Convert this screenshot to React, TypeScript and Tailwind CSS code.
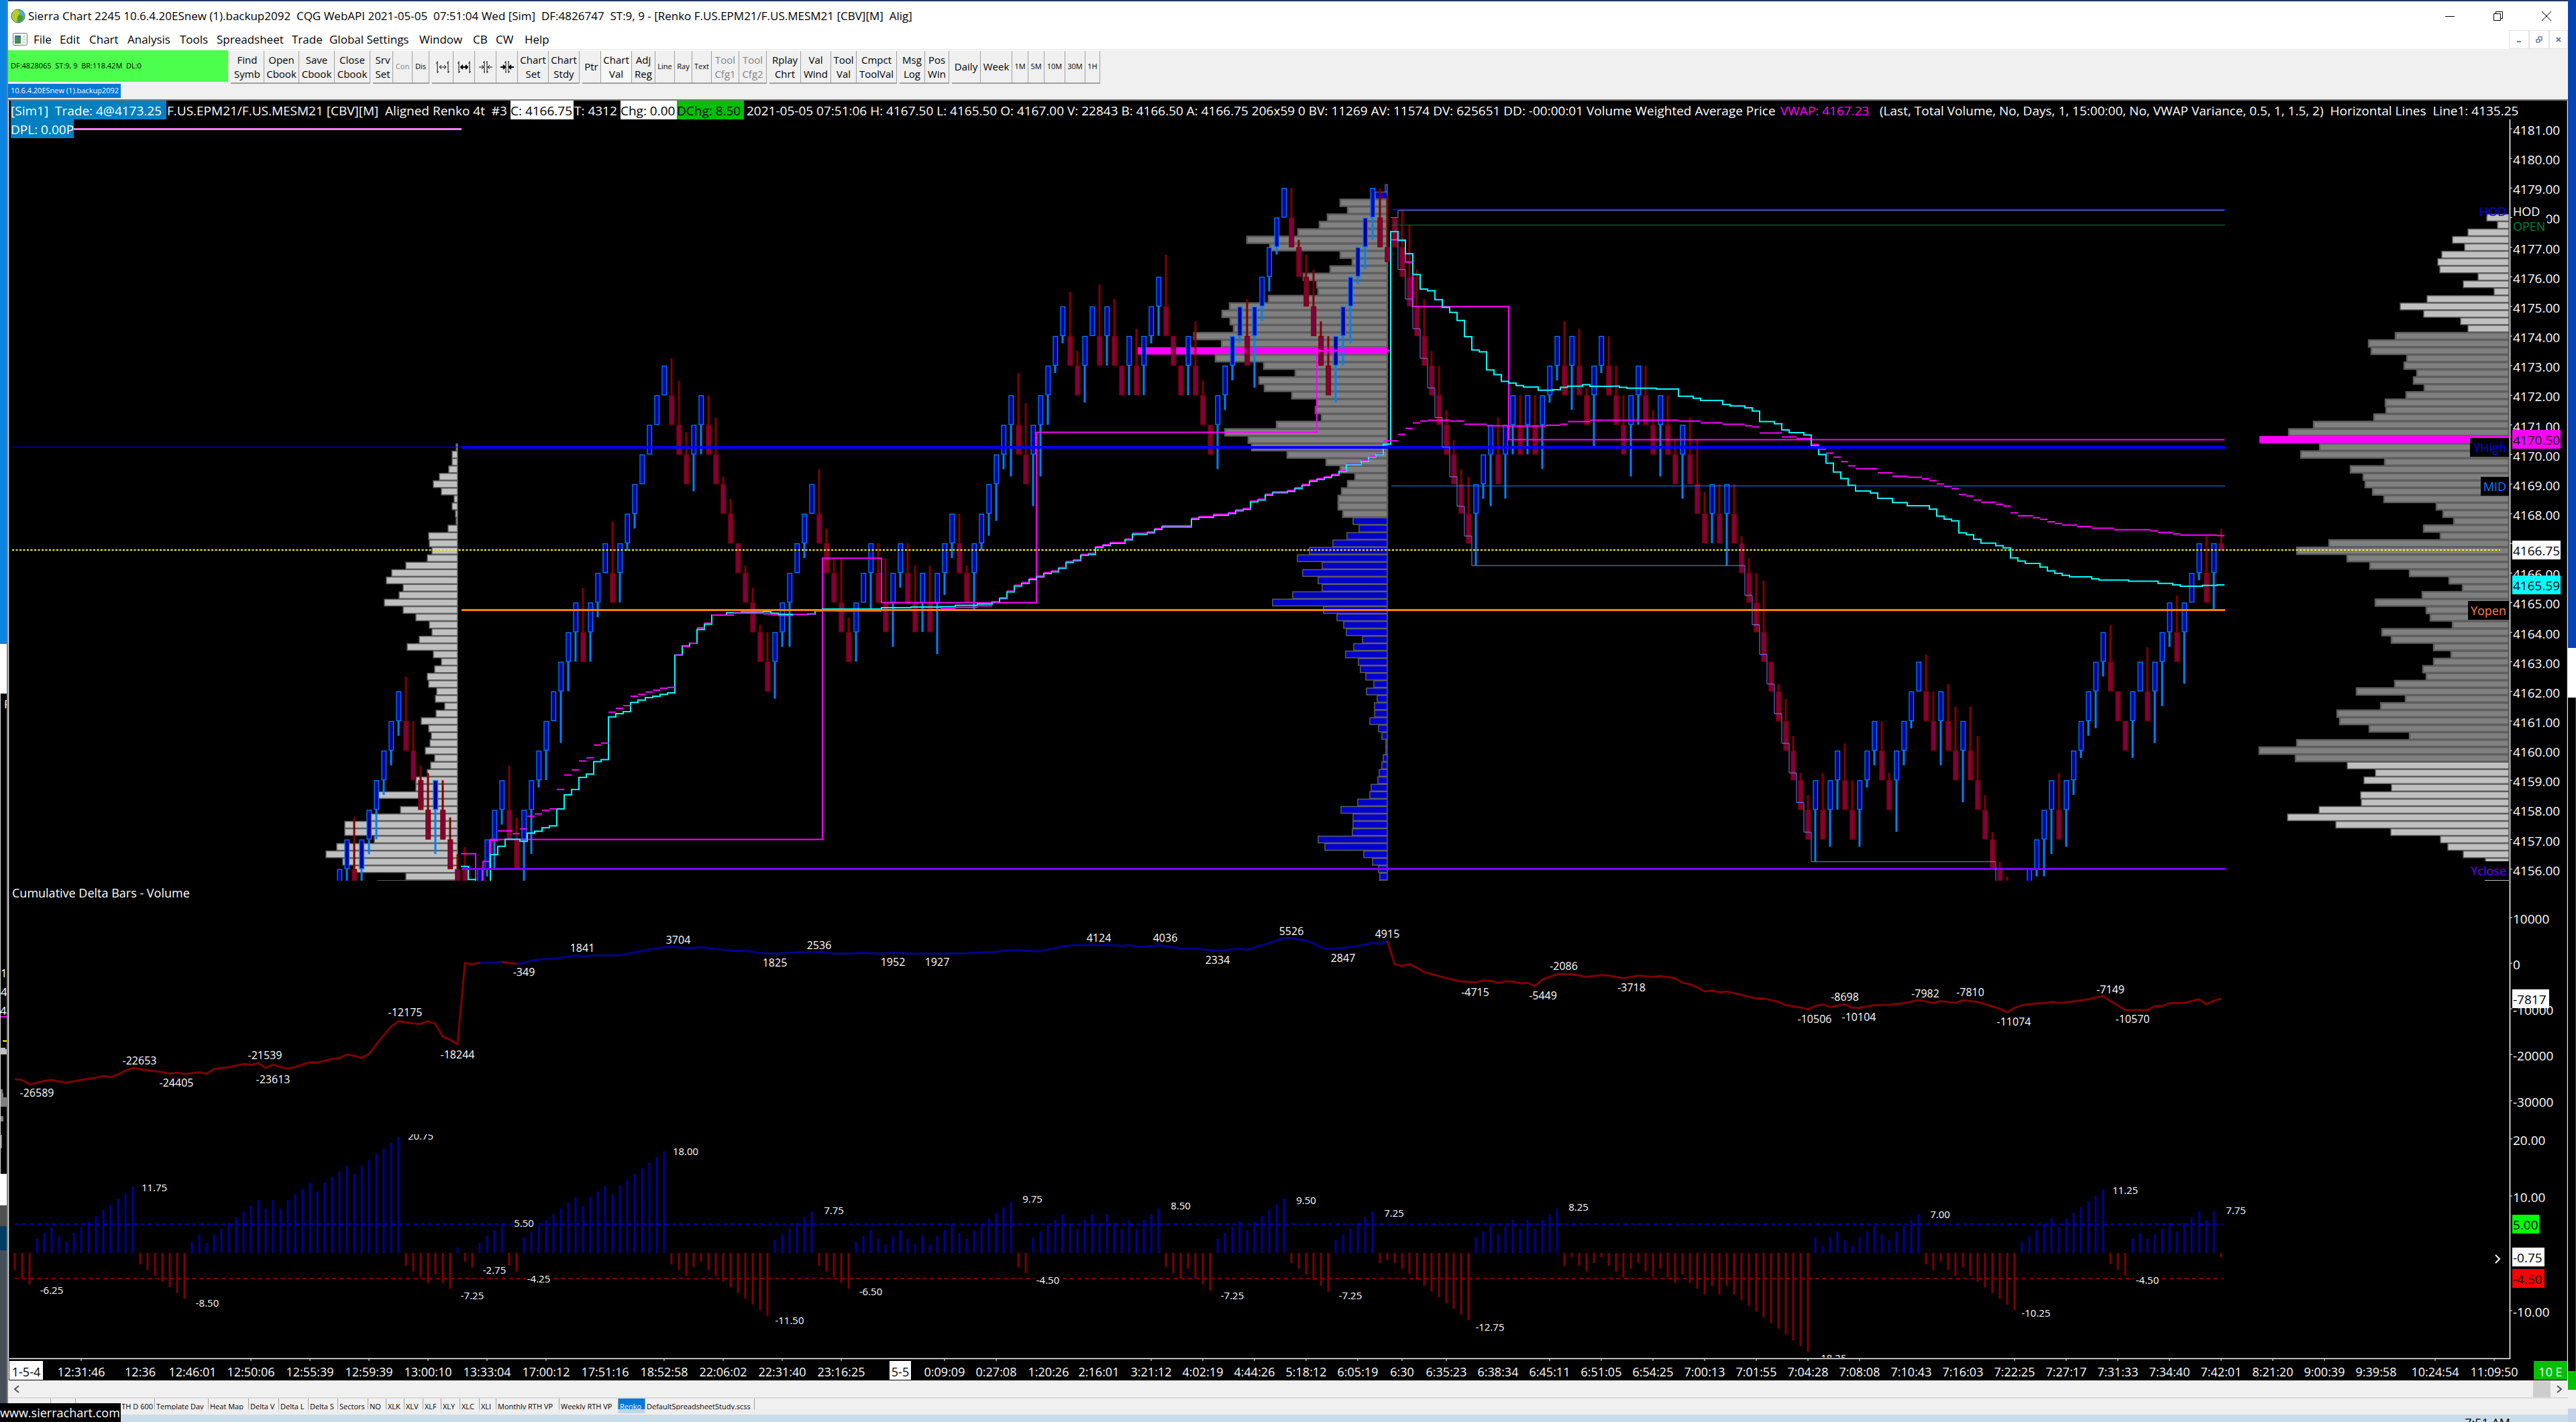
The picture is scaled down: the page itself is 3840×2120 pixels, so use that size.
import React from "react";
import clsx from "clsx";

/* ---------- scales ---------- */
const barX = (i: number) => 22 + 11 * i;
const priceY = (p: number) => 192 + (4181 - p) * 44.15;
const deltaY = (v: number) => 1436 - v * 0.68;
const swingY = (v: number) => 1868 - v * 8.54;

/* ---------- price bars: direction, top of body (41xx), wick in ticks; first bar is number 44 ---------- */
const FIRST_BAR = 44;
const BARS = `U56.0 U57.2 D56.7 U57.2 U58.2 U59.4 U60.2 U61.2 U62.2 D61.6 D60.4 D59.2 D58.5 U59.6 D58.4 D57.3 D56.2 D56.3 - U56.0
U57.1 U58.4 U59.2 D58.6 D57.3 U58.6 U59.6 U60.1 U61.4 U62.0 U63.7 U64.4 U65.4 D64.6 U65.4 U66.2 U67.0 D66.7 U67.4 U68.1
U69.2 U70.0 U71.0 U72.0 U73.0 D72.5 D71.6 D70.3 U71.5 U72.4 D71.4 D70.5 D69.1 D68.2 D67.0 D66.1 D65.2 D64.1 D63.4 U64.5
U65.2 U66.6 U67.0 U68.2 U69.0 D68.6 D67.2 D66.2 D65.6 D64.2 U65.4 U66.0 U67.5 D66.4 D65.6 U66.6 U67.2 D66.4 D65.5 U66.4
D65.5 U66.7 U67.3 U68.2 D67.4 D66.1 U67.5 U68.1 U69.3 U70.5 U71.2 U72.7 D71.7 D70.7 U71.7 U72.7 U73.4 U74.1 U75.1 D74.6
D73.2 U74.5 U75.0 D74.7 U75.4 D74.5 D73.0 U74.4 D73.5 U74.4 U75.1 U76.4 D75.7 D74.0 D73.0 U74.4 D73.6 D72.2 D71.0 U72.6
U73.2 U74.2 U75.1 D74.5 U75.7 U76.2 U77.2 U78.1 U79.0 D78.4 D77.1 D76.3 D75.5 D74.2 D73.4 U74.5 U75.4 U76.5 U77.1 U78.3
U79.3 D78.4 D77.7 D78.0 D77.5 D76.7 D75.5 D74.5 D73.2 D72.4 D71.2 D70.2 D69.2 D68.5 U69.7 U70.2 U71.7 D70.5 U71.6 U72.4
D71.4 U72.4 D71.4 U72.6 U73.1 U74.2 D73.6 U74.6 D73.5 D72.1 U73.7 U74.1 D73.4 D72.4 D71.4 U72.7 U73.4 D72.4 D71.2 U72.7
D71.4 D70.2 U71.6 D70.5 D69.6 D68.3 U69.4 D68.4 U69.7 D68.4 D67.1 D66.2 D65.4 D64.7 D63.0 D62.1 D61.3 D60.2 D59.1 D58.2
U59.7 D58.5 U59.5 U60.4 D59.5 D58.4 U59.5 U60.1 U61.2 D60.4 D59.1 U60.7 U61.2 U62.1 U63.0 D62.5 D61.4 U62.6 D61.5 D60.6
U61.7 D60.6 D59.6 D58.2 D57.1 D56.1 D55.3 - - U56.0 U57.1 U58.5 U59.6 D58.5 U59.5 U60.2 U61.1 U62.2 U63.5 U64.2
D63.5 D62.0 D61.0 U62.5 U63.0 D62.6 U63.7 U64.6 U65.2 D64.5 U65.7 U66.0 U67.1 D66.5 U67.5 D67.2`
  .trim()
  .split(/\s+/);

type Step = [number, number];

/* volume weighted average: [bar, price - 4100] */
const VWAP: Step[] = [
  [61, 56.09], [62, 55.65], [63, 55.3], [65, 56.49], [66, 56.77], [67, 57.01], [69, 56.94], [70, 57.22], [71, 57.28], [72, 57.4],
  [73, 57.46], [74, 58.03], [75, 58.51], [76, 58.69], [77, 59.1], [78, 59.21], [79, 59.63], [80, 59.7], [81, 61.14], [82, 61.25],
  [83, 61.32], [84, 61.63], [85, 61.71], [86, 61.79], [87, 61.84], [88, 61.9], [89, 61.95], [90, 63.23], [91, 63.54], [92, 63.63],
  [93, 64.09], [94, 64.27], [95, 64.58], [97, 64.66], [99, 64.68], [102, 64.69], [103, 64.64], [104, 64.6], [108, 64.61], [109, 64.72],
  [110, 64.78], [118, 64.83], [122, 64.85], [126, 64.86], [128, 64.91], [131, 64.95], [133, 65.02], [134, 65.14], [135, 65.36],
  [136, 65.56], [137, 65.65], [138, 65.78], [139, 65.87], [140, 65.98], [141, 66.04], [142, 66.16], [143, 66.36], [144, 66.42],
  [145, 66.6], [146, 66.63], [147, 66.86], [148, 66.93], [149, 67], [151, 67.12], [152, 67.31], [154, 67.36], [155, 67.47],
  [156, 67.56], [160, 67.82], [161, 67.88], [163, 67.95], [165, 68.01], [166, 68.1], [167, 68.15], [168, 68.4], [169, 68.46],
  [170, 68.63], [171, 68.71], [173, 68.76], [174, 68.85], [175, 68.96], [176, 69.1], [177, 69.16], [178, 69.22], [179, 69.3],
  [180, 69.43], [181, 69.66], [183, 69.78], [184, 69.91], [185, 70], [186, 70.35], [187, 77.53], [188, 77.23], [189, 76.78],
  [190, 76.08], [191, 75.59], [192, 75.53], [193, 75.23], [194, 74.97], [195, 74.8], [196, 74.53], [197, 73.98], [198, 73.53],
  [199, 73.47], [200, 72.86], [201, 72.7], [202, 72.47], [203, 72.41], [204, 72.33], [205, 72.28], [207, 72.17], [209, 72.19],
  [210, 72.27], [211, 72.31], [213, 72.36], [214, 72.3], [217, 72.31], [218, 72.27], [219, 72.24], [223, 72.21], [226, 71.97],
  [228, 71.9], [229, 71.83], [232, 71.69], [233, 71.64], [235, 71.58], [236, 71.47], [237, 71.11], [239, 71.04], [240, 70.83],
  [241, 70.74], [243, 70.66], [244, 70.29], [245, 70], [246, 69.71], [247, 69.41], [248, 69.19], [249, 68.96], [250, 68.77],
  [252, 68.7], [253, 68.52], [255, 68.38], [257, 68.27], [260, 68.16], [261, 67.92], [262, 67.82], [263, 67.76], [264, 67.35],
  [265, 67.29], [266, 67.14], [267, 67.01], [269, 66.92], [270, 66.85], [271, 66.51], [272, 66.4], [273, 66.32], [275, 66.2],
  [276, 66.07], [277, 65.99], [278, 65.92], [279, 65.87], [282, 65.8], [283, 65.76], [287, 65.72], [291, 65.65], [293, 65.6],
  [294, 65.55], [297, 65.58], [299, 65.6],
];

/* second average, drawn as separate dashes */
const DASH_EARLY: Step[] = [
  [65, 56.97], [66, 57.29], [68, 57.2], [69, 57.36], [70, 57.79], [71, 57.86], [72, 57.98], [73, 58.03], [74, 58.69], [75, 59.18],
  [76, 59.35], [77, 59.65], [78, 59.76], [79, 60.19], [80, 60.26], [81, 61.3], [82, 61.43], [83, 61.52], [84, 61.84], [85, 61.9],
  [86, 61.98], [87, 62.04], [88, 62.11], [89, 62.14], [90, 63.23], [91, 63.52], [92, 63.63], [93, 64.15], [94, 64.31], [95, 64.58],
  [98, 64.65], [102, 64.62], [103, 64.59], [104, 64.56], [106, 64.6], [108, 64.62], [109, 64.72], [112, 64.71], [118, 64.74],
  [126, 64.8], [128, 64.84], [131, 64.89], [133, 65.02],
];
const DASH_LATE: Step[] = [
  [186, 70.46], [188, 70.68], [189, 70.88], [190, 71.07], [191, 71.13], [192, 71.16], [195, 71.13], [197, 71.02], [200, 70.97],
  [203, 70.96], [208, 70.99], [210, 71.02], [211, 71.11], [214, 71.16], [226, 71.13], [229, 71.07], [232, 71.02], [235, 70.97],
  [236, 70.93], [237, 70.73], [240, 70.59], [242, 70.54], [244, 70.34], [245, 70.18], [246, 70.05], [247, 69.91], [248, 69.76],
  [249, 69.62], [250, 69.52], [253, 69.38], [255, 69.27], [257, 69.23], [259, 69.18], [260, 69.12], [261, 69.01], [262, 68.92],
  [263, 68.85], [264, 68.65], [265, 68.6], [266, 68.46], [267, 68.39], [269, 68.32], [270, 68.26], [271, 68.03], [272, 67.93],
  [274, 67.87], [275, 67.81], [276, 67.73], [277, 67.67], [278, 67.62], [280, 67.57], [282, 67.51], [285, 67.46], [290, 67.42],
  [291, 67.37], [293, 67.32], [294, 67.28], [299, 67.26],
];
const DASHES: Step[] = [
  ...DASH_EARLY,
  ...VWAP.filter(([i]) => i > 133 && i < 186).map(([i, p]): Step => [i, p + 0.03]),
  ...DASH_LATE,
];

const POC: Step[] = [
  [61, 56.52], [63, 55], [64, 56.26], [65, 57], [110, 66.5], [118, 65], [139, 70.75], [177, 73.5], [187, 77.25], [189, 76.5],
  [190, 75], [203, 70.5],
];
const DAY_HIGH: Step[] = [[187, 78], [188, 78.25]];
const DAY_LOW: Step[] = [
  [187, 77.25], [188, 76.25], [189, 75.25], [190, 74.25], [191, 73.25], [192, 72.25], [193, 71.25], [194, 70.25], [195, 69.25],
  [196, 68.25], [197, 67.25], [198, 66.25], [235, 65.25], [236, 64.25], [237, 63.25], [238, 62.25], [239, 61.25], [240, 60.25],
  [241, 59.25], [242, 58.25], [243, 57.25], [244, 56.25], [269, 54],
];

function stepPath(steps: Step[], end: number, joined: boolean) {
  return steps
    .map(([i, p], k) => {
      const next = k + 1 < steps.length ? steps[k + 1][0] : end;
      const y = priceY(4100 + p).toFixed(1);
      const move = joined && k > 0 ? `V${y}` : `M${barX(i) - 6} ${y}`;
      return `${move}H${barX(next) - 6}`;
    })
    .join("");
}

/* ---------- volume profiles: bar lengths, one per quarter point going down ---------- */
const PROFILE_A = [
  2, 8, 8, 13, 27, 36, 24, 5, 8, 3, 2, 14, 43, 42, 38, 45, 77, 98, 106, 81, 87, 109, 81, 62, 42, 38, 57, 75, 36, 24, 34, 45, 43,
  31, 33, 19, 32, 54, 43, 39, 41, 48, 34, 40, 45, 62, 62, 119, 51, 85, 131, 168, 168, 124, 180, 196, 171, 155, 77, 119,
];
const PROFILE_B = [
  3, 18, 70, 59, 89, 101, 133, 209, 175, 70, 52, 85, 125, 105, 103, 177, 235, 246, 234, 229, 288, 247, 372, 256, 184, 137, 191,
  183, 142, 105, 107, 98, 165, 242, 207, 202, 149, 91, 70, 48, 59, 68, 73, 73, 66, 51, 42, 60, 81, 116, 134, 97, 126, 103, 97,
  141, 171, 95, 75, 65, 61, 37, 50, 62, 43, 40, 32, 20, 31, 15, 19, 19, 26, 13, 8, 2, 2, 6, 8, 12, 14, 24, 26, 44, 69, 51, 51,
  52, 103, 93, 35, 22, 13, 11, 12,
];
const PROFILE_C = [
  33, 17, 61, 84, 66, 100, 106, 103, 46, 68, 22, 122, 162, 127, 72, 61, 169, 209, 205, 152, 156, 137, 142, 126, 153, 184, 183,
  201, 291, 328, 372, 282, 310, 185, 236, 217, 214, 203, 186, 108, 98, 82, 127, 102, 268, 316, 241, 207, 148, 89, 69, 129, 199,
  123, 117, 84, 189, 175, 112, 86, 112, 128, 123, 170, 227, 154, 191, 256, 252, 208, 148, 316, 372, 318, 241, 199, 216, 175,
  221, 220, 283, 330, 258, 176, 102, 91, 68, 35,
];

const LIGHT = "#c0c0c0";
const GRAY = "#808080";
const NAVY = "#0000cc";

function Profile({ right, top, sizes, fill, poc }: {
  right: number;
  top: number;
  sizes: number[];
  fill: (k: number) => string;
  poc?: number;
}) {
  return (
    <g stroke="#5f5f5f">
      {sizes.map((w, k) => {
        const y = priceY(top - k * 0.25) - 5.5;
        if (k === poc) return <rect key={k} x={right - w} y={y} width={w} height={11} fill="#ff00ff" stroke="none" />;
        return <rect key={k} x={right - w} y={y + 0.5} width={w} height={10} fill={fill(k)} strokeWidth={fill(k) === GRAY ? 2.5 : 1.5} />;
      })}
    </g>
  );
}

/* ---------- cumulative delta in hundreds ---------- */
const DELTA: Step[] = [
  [0, -254], [1, -256], [2, -266], [3, -262], [4, -258], [5, -256], [6, -260], [7, -262], [9, -256], [11, -251], [12, -247],
  [13, -250], [14, -244], [15, -236], [16, -230], [18, -235], [20, -239], [21, -242], [22, -240], [23, -243], [25, -239],
  [26, -242], [27, -232], [29, -228], [31, -221], [32, -223], [33, -219], [34, -230], [35, -222], [36, -228], [37, -231],
  [38, -228], [39, -222], [40, -217], [41, -218], [43, -210], [44, -208], [45, -200], [46, -203], [47, -208], [48, -199],
  [49, -178], [50, -158], [51, -139], [52, -127], [53, -130], [54, -132], [55, -133], [56, -127], [57, -133], [58, -161],
  [59, -168], [60, -178], [61, 0], [62, -2], [63, 1], [65, 1], [66, 3], [67, 0], [68, -1], [69, 0], [70, 6], [71, 8], [73, 10],
  [76, 17], [77, 15], [78, 17], [80, 17], [82, 17], [84, 24], [86, 30], [88, 35], [89, 36], [91, 33], [93, 35], [95, 31], [97, 28],
  [99, 27], [101, 22], [103, 21], [106, 24], [109, 25], [111, 21], [113, 21], [115, 23], [117, 21], [119, 23], [121, 21],
  [126, 21], [129, 22], [131, 24], [133, 25], [134, 28], [136, 29], [138, 26], [139, 26], [142, 37], [143, 39], [145, 40],
  [147, 39], [148, 40], [150, 38], [151, 40], [152, 36], [153, 36], [155, 39], [157, 35], [158, 32], [160, 32], [161, 30],
  [163, 27], [165, 30], [166, 32], [167, 29], [168, 35], [170, 44], [171, 50], [172, 55], [173, 55], [175, 49], [176, 44],
  [177, 34], [178, 31], [181, 35], [183, 41], [184, 45], [185, 42], [186, 49], [187, -2], [188, -6], [189, -2], [190, -10],
  [191, -20], [192, -24], [194, -33], [196, -40], [198, -42], [199, -38], [200, -39], [201, -43], [202, -40], [203, -40],
  [204, -44], [205, -43], [206, -50], [207, -36], [209, -24], [211, -24], [213, -30], [215, -26], [216, -27], [218, -33],
  [220, -27], [222, -30], [223, -28], [225, -33], [226, -43], [227, -46], [228, -53], [229, -62], [230, -60], [231, -64],
  [232, -62], [236, -77], [237, -77], [239, -85], [240, -92], [242, -97], [243, -101], [244, -94], [245, -90], [246, -96],
  [248, -90], [249, -98], [250, -98], [252, -92], [254, -91], [256, -88], [258, -81], [260, -87], [261, -83], [263, -87],
  [264, -81], [266, -85], [267, -90], [269, -100], [270, -108], [271, -98], [272, -92], [274, -88], [275, -88], [276, -85],
  [277, -87], [279, -84], [281, -79], [282, -75], [283, -72], [284, -83], [286, -103], [289, -103], [290, -94], [291, -94],
  [292, -88], [294, -87], [296, -79], [297, -90], [298, -82], [299, -78],
];
const deltaPoints = (from: number, to: number) =>
  DELTA.filter(([i]) => i >= from && i <= to).map(([i, v]) => `${barX(i)},${deltaY(v).toFixed(1)}`).join(" ");

const DELTA_LABELS: [string, number, number][] = [
  ["-26589", 55, 1629], ["-22653", 208, 1581], ["-24405", 263, 1614], ["-21539", 395, 1573], ["-23613", 407, 1609],
  ["-12175", 604, 1509], ["-18244", 682, 1572], ["-349", 781, 1449], ["1841", 868, 1413], ["3704", 1011, 1401],
  ["1825", 1155, 1435], ["2536", 1221, 1409], ["1952", 1331, 1434], ["1927", 1397, 1434], ["4124", 1638, 1398],
  ["4036", 1737, 1398], ["2334", 1815, 1431], ["5526", 1925, 1388], ["2847", 2002, 1428], ["4915", 2068, 1392],
  ["-4715", 2199, 1479], ["-5449", 2300, 1484], ["-2086", 2331, 1440], ["-3718", 2432, 1472], ["-10506", 2705, 1519],
  ["-8698", 2750, 1486], ["-10104", 2771, 1516], ["-7982", 2870, 1481], ["-7810", 2937, 1479], ["-11074", 3002, 1523],
  ["-7149", 3146, 1475], ["-10570", 3179, 1519],
];

/* ---------- swing length histogram ---------- */
const SWING = `-3 -4.5 -5.5 2.5 3.5 4.5 3 2 3.5 4.5 5.5 6.5 7.5 8.5 9.5 10.5 11.5 -2 -3 -4 -5 -6 -7 -8 2 3.25 1.75 3.25 4.25 5.25
6.25 7.25 8.25 9.25 7.75 9.25 7.75 9.25 10.25 11.25 12.25 10.75 12.25 13.25 14.25 15.25 13.75 15.25 16.25 17.25 18.25 19.25 20.25
-2.25 -3.25 -4.25 -5.25 -3.75 -5.25 -6.25 1 -1.5 -2.5 1.75 3 4 5 -2.25 -3.25 2.75 3.75 4.75 5.75 6.75 7.75 8.75 9.75 8.25 9.75
10.75 11.75 10.25 11.75 12.75 13.75 14.75 15.75 16.75 17.75 -2 -3 -4 -2.5 -1.5 -3 -4 -5 -6 -7 -8 -9 -10 -11 2.25 3.25 4.25 5.25
6.25 7.25 -2.25 -3.25 -4.25 -5.25 -6.25 2 3 4 2.5 1.5 3 4 2.5 1.5 3 1.5 3 4 5 3.5 2.5 4 5 6 7 8 9 -2.5 -3.5 2.75 3.75 4.75 5.75
6.75 5.25 4.25 5.75 6.75 5.25 6.75 5.25 4.25 5.75 4.25 5.75 6.75 7.75 -2.5 -3.5 -4.5 -2.75 -4.5 -5.5 -6.5 2.5 3.5 4.5 5.5 4 5.5
6.5 7.5 8.5 9.5 -1.75 -2.75 -3.75 -4.75 -5.75 -6.75 2.25 3.25 4.25 5.25 6.25 7.25 -1.75 -1.25 -1.75 -2.75 -3.75 -4.75 -5.75
-6.75 -7.75 -8.75 -9.75 -10.75 -11.75 2.75 3.75 4.75 3.25 4.75 5.75 4.25 5.75 4.25 5.75 6.75 7.75 -2.25 -0.75 -2.25 -3.25 -1.75
-0.75 -2.25 -3.25 -4.25 -2.75 -1.75 -3.25 -4.25 -2.75 -4.25 -5.25 -3.75 -5.25 -6.25 -7.25 -5.75 -7.25 -5.75 -7.25 -8.25 -9.25
-10.25 -11.25 -12.25 -13.25 -14.25 -15.25 -16.25 -17.25 2.75 1.25 2.75 3.75 2.25 1.25 2.75 3.75 4.75 3.25 2.25 3.75 4.75 5.75
6.75 -2 -3 -1.5 -3 -4 -2.5 -4 -5 -6 -7 -8 -9 -10 2 3 4 5 6 4.5 6 7 8 9 10 11 -2 -3 -4 2.5 3.5 2.5 3.25 4.25 5.25 3.75 5.25 6.25
7.25 5.75 7.25 -0.75`
  .split(/\s+/)
  .map(Number);

const SWING_LABELS: [string, number, number][] = [
  ["-6.25", 77, 1923], ["11.75", 230, 1770], ["-8.50", 309, 1942], ["20.75", 627, 1693], ["5.50", 781, 1823],
  ["-2.75", 737, 1893], ["-4.25", 803, 1906], ["-7.25", 704, 1931], ["18.00", 1022, 1716], ["-11.50", 1177, 1968],
  ["7.75", 1243, 1804], ["-6.50", 1298, 1925], ["9.75", 1539, 1787], ["-4.50", 1562, 1908], ["8.50", 1760, 1797],
  ["-7.25", 1837, 1931], ["9.50", 1947, 1789], ["-7.25", 2013, 1931], ["7.25", 2078, 1808], ["-12.75", 2221, 1978],
  ["8.25", 2353, 1799], ["-18.25", 2731, 2024], ["7.00", 2892, 1810], ["-10.25", 3035, 1957], ["11.25", 3168, 1774],
  ["-4.50", 3201, 1908], ["7.75", 3333, 1804],
];

/* ---------- time axis: label, centre, tick ---------- */
const TIMES: [string, number, boolean][] = [
  ["12:31:46", 121, true], ["12:36", 209, false], ["12:46:01", 287, false], ["12:50:06", 374, true], ["12:55:39", 462, true],
  ["12:59:39", 550, true], ["13:00:10", 638, true], ["13:33:04", 726, true], ["17:00:12", 814, true], ["17:51:16", 902, false],
  ["18:52:58", 990, true], ["22:06:02", 1078, true], ["22:31:40", 1166, true], ["23:16:25", 1254, true], ["0:09:09", 1408, true],
  ["0:27:08", 1485, true], ["1:20:26", 1563, false], ["2:16:01", 1638, false], ["3:21:12", 1716, true], ["4:02:19", 1793, true],
  ["4:44:26", 1870, true], ["5:18:12", 1947, true], ["6:05:19", 2024, true], ["6:30", 2090, true], ["6:35:23", 2156, true],
  ["6:38:34", 2233, false], ["6:45:11", 2310, true], ["6:51:05", 2387, true], ["6:54:25", 2464, true], ["7:00:13", 2541, true],
  ["7:01:55", 2618, true], ["7:04:28", 2695, true], ["7:08:08", 2772, true], ["7:10:43", 2849, false], ["7:16:03", 2926, false],
  ["7:22:25", 3003, true], ["7:27:17", 3080, true], ["7:31:33", 3157, true], ["7:34:40", 3234, true], ["7:42:01", 3311, true],
  ["8:21:20", 3388, true], ["9:00:39", 3465, true], ["9:39:58", 3542, false], ["10:24:54", 3630, true], ["11:09:50", 3718, true],
];

const SCALE_LABELS: [string, number][] = [
  ["10000", 1368], ["0", 1436], ["-10000", 1504], ["-20000", 1572], ["-30000", 1641], ["20.00", 1698], ["10.00", 1783],
  ["-10.00", 1954],
];

/* value boxes on the right scale: text, top, width, background, text colour */
const SCALE_TAGS: [string, number, number, string, string][] = [
  ["4170.50", 641, 72, "#ff00ff", "#000"],
  ["4166.75", 806, 72, "#fff", "#000"],
  ["4165.59", 858, 72, "#00ffff", "#000"],
  ["-7817", 1475, 55, "#fff", "#000"],
  ["5.00", 1811, 40, "#00ff00", "#000"],
  ["-0.75", 1860, 48, "#fff", "#000"],
  ["-4.50", 1892, 48, "#ff0000", "#000"],
];

const LINE_TAGS: [string, number, number, string, boolean][] = [
  ["HOD", 315, 48, "#0000ff", false],
  ["YHigh", 667, 58, "#0000ff", true],
  ["MID", 725, 42, "#0080ff", true],
  ["Yopen", 910, 61, "#ff8040", true],
  ["Yclose", 1298, 62, "#6a00ff", true],
];

function PriceBars() {
  return (
    <g>
      {BARS.map((code, k) => {
        if (code === "-") return null;
        const i = FIRST_BAR + k;
        const x = barX(i);
        const top = priceY(4100 + Number(code.slice(1, 3)));
        const wick = Number(code.slice(4)) * 11;
        const height = i === 186 ? 22 : i === 299 ? 10 : 44;
        return code[0] === "U" ? (
          <g key={i}>
            <rect x={x - 1.5} y={top + height} width={3} height={wick} fill="#0080ff" />
            <rect x={x - 3} y={top + 0.5} width={6.5} height={height - 1} fill="#0000a0" stroke="#0080ff" strokeWidth={1.3} />
          </g>
        ) : (
          <g key={i}>
            <rect x={x - 1.5} y={top - wick} width={3} height={wick} fill="#800000" />
            <rect x={x - 3} y={top + 0.5} width={6.5} height={height - 1} fill="#800040" stroke="#800000" strokeWidth={1.5} />
          </g>
        );
      })}
    </g>
  );
}

function Chart() {
  return (
    <svg viewBox="12 150 3816 1908" className="block h-auto w-full bg-black" fill="none" role="img" aria-label="Renko chart">
      <defs>
        <clipPath id="price"><rect x="14" y="150" width="3726" height="1163" /></clipPath>
        <clipPath id="swing"><rect x="14" y="1691" width="3726" height="333" /></clipPath>
      </defs>

      <g clipPath="url(#price)">
        <path d="M110 192.500H688" stroke="#ff80ff" strokeWidth="3" />
        <Profile right={682} top={4170.25} sizes={PROFILE_A} fill={() => LIGHT} />
        <Profile right={2068} top={4179} sizes={PROFILE_B} fill={(k) => (k < 2 || k > 44 ? NAVY : GRAY)} poc={22} />
        <Profile right={3740} top={4178} sizes={PROFILE_C} fill={(k) => (k < 16 || k > 73 ? LIGHT : GRAY)} poc={30} />
        <path d="M3715 1309H3740M3704 1312H3740" stroke={LIGHT} strokeWidth="2" />
        <PriceBars />
        <path d={stepPath(POC, 300, true)} stroke="#ff00ff" strokeWidth="2" />
        <path d={stepPath(VWAP, 300, true)} stroke="#00ffff" strokeWidth="2" />
        <path d={stepPath(DASHES, 300, false)} stroke="#ff00ff" strokeWidth="2" />
        <path d="M18 666.500H688" stroke="#0000ff" />
        <path d="M688 667H3317" stroke="#0000ff" strokeWidth="4" />
        <path d="M688 909.500H3317" stroke="#ff8000" strokeWidth="3" />
        <path d="M688 1295.500H3317" stroke="#8000ff" strokeWidth="3" />
        <path d="M2074 312.500H3317" stroke="#0000ff" strokeWidth="2" />
        <path d={stepPath(DAY_HIGH, 300, true)} stroke="#8080ff" />
        <path d={stepPath(DAY_LOW, 270, true)} stroke="#8080ff" />
        <path d="M2074 335.500H3317" stroke="#008040" />
        <path d="M2074 724.500H3317" stroke="#0080ff" />
        <path d="M18 820H3727" stroke="#ffff00" strokeWidth="2" strokeDasharray="3 2.500" />
      </g>

      <polyline points={deltaPoints(0, 63)} stroke="#800000" strokeWidth="3" />
      <polyline points={deltaPoints(63, 186)} stroke="#000090" strokeWidth="3" />
      <polyline points={deltaPoints(66, 68)} stroke="#800000" strokeWidth="3" />
      <polyline points={deltaPoints(186, 299)} stroke="#800000" strokeWidth="3" />
      <g fill="#fff" fontSize="16" textAnchor="middle">
        {DELTA_LABELS.map(([t, x, y]) => (
          <text key={t} x={x} y={y + 6}>{t}</text>
        ))}
      </g>
      <text x="18" y="1338" fill="#fff" fontSize="18">Cumulative Delta Bars - Volume</text>

      <g clipPath="url(#swing)">
        {SWING.map((v, i) => (
          <rect
            key={i}
            x={barX(i) - 1.5}
            y={v > 0 ? swingY(v) : 1868}
            width={3}
            height={Math.abs(v) * 8.54}
            fill={v > 0 ? "#0000a0" : "#800000"}
          />
        ))}
        <path d="M22 1825H3314" stroke="#0000c0" strokeWidth="2" strokeDasharray="6 5" />
        <path d="M22 1906H3314" stroke="#800000" strokeWidth="2" strokeDasharray="6 5" />
        {SWING_LABELS.map(([t, x, y]) => (
          <g key={`${t}${x}`}>
            <rect x={x - t.length * 4} y={y - 8} width={t.length * 8} height={16} fill="#000" />
            <text x={x} y={y + 6} fill="#fff" fontSize="15" textAnchor="middle">{t}</text>
          </g>
        ))}
      </g>

      {/* scales */}
      <path d="M3741.500 178V2025M14 2025.500H3742" stroke="#fff" strokeWidth="1.500" />
      <path d="M12.500 150V2058M3827.500 150V2058" stroke="#e8e8e8" strokeWidth="1.500" />
      <g fill="#fff" fontSize="19">
        {Array.from({ length: 26 }, (_, k) => 4181 - k).map((p) => (
          <g key={p}>
            <path d={`M3742 ${priceY(p)}h3`} stroke="#fff" />
            <text x="3746" y={priceY(p) + 9}>{p.toFixed(2)}</text>
          </g>
        ))}
        {SCALE_LABELS.map(([t, y]) => (
          <g key={t}>
            <path d={`M3742 ${y}h3`} stroke="#fff" />
            <text x="3746" y={y + 9}>{t}</text>
          </g>
        ))}
      </g>
      <rect x="3745" y="302" width="50" height="24" fill="#000" />
      <rect x="3745" y="325" width="52" height="22" fill="#000" />
      <text x="3746" y="322" fontSize="18" fill="#fff">HOD</text>
      <text x="3746" y="344" fontSize="18" fill="#008040">OPEN</text>
      {SCALE_TAGS.map(([t, y, w, bg, color]) => (
        <g key={t}>
          <rect x="3745" y={y} width={w} height="28" fill={bg} />
          <text x="3746" y={y + 22} fontSize="19" fill={color}>{t}</text>
        </g>
      ))}
      {LINE_TAGS.map(([t, y, w, color, box]) => (
        <g key={t}>
          {box && <rect x={3740 - w} y={y - 14} width={w} height="28" fill="#000" />}
          <text x="3736" y={y + 7} fontSize="18" fill={color} textAnchor="end">{t}</text>
        </g>
      ))}
      <path d="M3720 1871l6 6l-6 6" stroke="#fff" strokeWidth="2" />

      <g fill="#fff" fontSize="18" textAnchor="middle">
        {TIMES.map(([t, x, tick]) => (
          <g key={t}>
            {tick && <path d={`M${x} 2026v3`} stroke="#fff" />}
            <text x={x} y="2052">{t}</text>
          </g>
        ))}
        <rect x="14" y="2029" width="50" height="28" />
        <rect x="1326" y="2029" width="32" height="28" />
        <rect x="3777" y="2029" width="50" height="28" fill="#00c000" />
        <text x="39" y="2052" fill="#000">1-5-4</text>
        <text x="1342" y="2052" fill="#000">5-5</text>
        <text x="3802" y="2052">10 E</text>
      </g>
    </svg>
  );
}

/* ---------- window chrome ---------- */
const MENU: [string, string][] = [
  ["File", "w-[39px]"], ["Edit", "w-[44px]"], ["Chart", "w-[57px]"], ["Analysis", "w-[78px]"], ["Tools", "w-[55px]"],
  ["Spreadsheet", "w-[112px]"], ["Trade", "w-[56px]"], ["Global Settings", "w-[134px]"], ["Window", "w-[80px]"],
  ["CB", "w-[34px]"], ["CW", "w-[43px]"], ["Help", "w-[44px]"],
];

type Tool = { label?: string; icon?: number; w: string; small?: boolean; off?: boolean; on?: boolean };
const TOOL_GROUPS: Tool[][] = [
  [
    { label: "Find\nSymb", w: "w-[50px]" }, { label: "Open\nCbook", w: "w-[52px]" }, { label: "Save\nCbook", w: "w-[53px]" },
    { label: "Close\nCbook", w: "w-[53px]" },
  ],
  [{ label: "Srv\nSet", w: "w-[30px]" }, { label: "Con", w: "w-[29px]", small: true, off: true }, { label: "Dis", w: "w-[25px]", small: true }],
  [
    { icon: 0, w: "w-[32px]" }, { icon: 1, w: "w-[32px]" }, { icon: 2, w: "w-[32px]" }, { icon: 3, w: "w-[32px]" },
    { label: "Chart\nSet", w: "w-[46px]" }, { label: "Chart\nStdy", w: "w-[46px]" },
  ],
  [
    { label: "Ptr", w: "w-[28px]" }, { label: "Chart\nVal", w: "w-[46px]", on: true }, { label: "Adj\nReg", w: "w-[35px]" },
    { label: "Line", w: "w-[29px]", small: true }, { label: "Ray", w: "w-[26px]", small: true }, { label: "Text", w: "w-[29px]", small: true },
    { label: "Tool\nCfg1", w: "w-[41px]", off: true }, { label: "Tool\nCfg2", w: "w-[41px]", off: true },
  ],
  [
    { label: "Rplay\nChrt", w: "w-[47px]" }, { label: "Val\nWind", w: "w-[45px]" }, { label: "Tool\nVal", w: "w-[38px]" },
    { label: "Cmpct\nToolVal", w: "w-[60px]" },
  ],
  [{ label: "Msg\nLog", w: "w-[38px]" }, { label: "Pos\nWin", w: "w-[36px]" }],
  [
    { label: "Daily", w: "w-[43px]" }, { label: "Week", w: "w-[47px]" }, { label: "1M", w: "w-[24px]", small: true },
    { label: "5M", w: "w-[24px]", small: true }, { label: "10M", w: "w-[31px]", small: true }, { label: "30M", w: "w-[30px]", small: true },
    { label: "1H", w: "w-[22px]", small: true },
  ],
];

const SPACING = ["Widen bar spacing", "Widen bars", "Narrow bar spacing", "Narrow bars"];

function SpacingIcon({ kind }: { kind: number }) {
  const bold = kind % 2 === 1;
  const d = kind < 2 ? "M5 11h10M8 8l-3 3l3 3M12 8l3 3l-3 3" : "M0 11h6M4 8l3 3l-3 3M20 11h-6M16 8l-3 3l3 3";
  const posts = kind < 2 ? "M2 2v18M18 2v18M0 5h2M2 18h2M18 5h-2M18 18h2" : "M8 2v18M12 2v18M6 4h2M8 18h1M12 4h-1M12 18h2";
  return (
    <svg viewBox="0 0 20 22" className="h-[22px] w-5" fill="none" stroke="#000">
      <path d={posts} />
      <path d={d} strokeWidth={bold ? 2 : 1} />
    </svg>
  );
}

function ToolButton({ label, icon, w, small, off, on }: Tool) {
  return (
    <button
      type="button"
      aria-label={icon === undefined ? undefined : SPACING[icon]}
      className={clsx(
        "flex h-[49px] shrink-0 items-center justify-center overflow-hidden border-r border-b-2 border-r-[#a0a0a0] border-b-[#a0a0a0] text-center whitespace-pre",
        small ? "text-[11px]" : "text-[15px] leading-[21px]",
        off ? "text-[#838383]" : "text-black",
        on ? "bg-[#f8f8f8]" : "bg-[#f0f0f0]",
        w,
      )}
    >
      {icon === undefined ? label : <SpacingIcon kind={icon} />}
    </button>
  );
}

const TABS: [string, string][] = [
  ["", "w-[64px]"], ["", "w-[37px]"], ["TH D 600", "w-[118px]"], ["Template Day", "w-[80px]"], ["Heat Map", "w-[60px]"],
  ["Delta V", "w-[45px]"], ["Delta L", "w-[44px]"], ["Delta S", "w-[44px]"], ["Sectors", "w-[45px]"], ["NQ", "w-[27px]"],
  ["XLK", "w-[27px]"], ["XLV", "w-[28px]"], ["XLF", "w-[27px]"], ["XLY", "w-[28px]"], ["XLC", "w-[29px]"], ["XLI", "w-[25px]"],
  ["Monthly RTH VP", "w-[94px]"], ["Weekly RTH VP", "w-[88px]"], ["Renko", "w-[40px]"], ["DefaultSpreadsheetStudy.scss", "w-[163px]"],
];

const HEADER: [string, string][] = [
  ["[Sim1]  Trade: 4@4173.25", "w-[232px] bg-[#0080c0] text-white"],
  ["F.US.EPM21/F.US.MESM21 [CBV][M]  Aligned Renko 4t  #3", "w-[513px] text-white pl-px"],
  ["C: 4166.75", "w-[94px] bg-white text-black"],
  ["T: 4312", "w-[70px] text-white pl-px"],
  ["Chg: 0.00", "w-[84px] bg-white text-black"],
  ["DChg: 8.50", "w-[100px] bg-[#00c000] text-black"],
  [
    "2021-05-05 07:51:06 H: 4167.50 L: 4165.50 O: 4167.00 V: 22843 B: 4166.50 A: 4166.75 206x59 0 BV: 11269 AV: 11574 DV: 625651 DD: -00:00:01 Volume Weighted Average Price",
    "w-[1545px] text-white pl-1",
  ],
  ["VWAP: 4167.23", "w-[148px] text-[#ff00ff]"],
  ["(Last, Total Volume, No, Days, 1, 15:00:00, No, VWAP Variance, 0.5, 1, 1.5, 2)  Horizontal Lines  Line1: 4135.25", "w-[938px] text-white"],
];

function TitleBar() {
  return (
    <header className="bg-white text-black">
      <div className="flex h-[45px] items-center border-t-2 border-[#1f3b66] text-[17px]">
        <svg viewBox="0 0 22 22" className="ml-1 size-[22px]">
          <circle cx="11" cy="11" r="10" fill="#5aa9d6" stroke="#3b7f35" />
          <path d="M4 4c5-4 9-2 9 3s-6 5-4 13c-7-1-9-10-5-16z" fill="#b6cf1f" />
          <path d="M13 9c4 0 6 3 5 6s-5 5-7 6c-1-5-2-11 2-12z" fill="#4d9b2c" />
        </svg>
        <h1 className="ml-1 flex-1 whitespace-pre">
          {"Sierra Chart 2245 10.6.4.20ESnew (1).backup2092  CQG WebAPI 2021-05-05  07:51:04 Wed [Sim]  DF:4826747  ST:9, 9 - [Renko F.US.EPM21/F.US.MESM21 [CBV][M]  Alig]"}
        </h1>
        <div className="mr-6 flex gap-14">
          <button type="button" aria-label="Minimize">
            <svg viewBox="0 0 16 16" className="size-4" stroke="#000"><path d="M1 8.500h14" /></svg>
          </button>
          <button type="button" aria-label="Restore">
            <svg viewBox="0 0 16 16" className="size-4" fill="none" stroke="#000"><path d="M1.500 4.500h10v10h-10zM4.500 4.500v-3h10v10h-3" /></svg>
          </button>
          <button type="button" aria-label="Close">
            <svg viewBox="0 0 16 16" className="size-4" stroke="#000"><path d="M1 1l14 14M15 1l-14 14" /></svg>
          </button>
        </div>
      </div>
      <nav className="flex h-7 items-center text-[17px]">
        <svg viewBox="0 0 22 20" className="mr-[9px] ml-[7px] h-5 w-[22px]">
          <rect x="0.500" y="0.500" width="21" height="18" rx="2" fill="#f4f4f4" stroke="#777" />
          <rect x="3" y="4" width="9" height="12" fill="#3c8f5b" />
          <path d="M3 4h9v4z" fill="#3565a8" />
          <path d="M15 6h4M15 10h4M15 14h4" stroke="#bbb" />
        </svg>
        {MENU.map(([label, w]) => (
          <button key={label} type="button" className={clsx("shrink-0 text-left whitespace-nowrap", w)}>{label}</button>
        ))}
        <div className="ml-auto flex text-[#6d7f92]">
          <button type="button" aria-label="Minimize chart" className="flex h-7 w-[30px] items-center justify-center border border-[#e3e3e3]">
            <svg viewBox="0 0 10 10" className="size-2.5" stroke="currentColor" strokeWidth="2"><path d="M2 8h6" /></svg>
          </button>
          <button type="button" aria-label="Restore chart" className="flex h-7 w-[30px] items-center justify-center border border-[#e3e3e3]">
            <svg viewBox="0 0 10 10" className="size-2.5" fill="none" stroke="currentColor" strokeWidth="1.500"><path d="M1 5h5v4h-5zM4 4v-3h5v5h-2" /></svg>
          </button>
          <button type="button" aria-label="Close chart" className="flex h-7 w-[28px] items-center justify-center border border-[#e3e3e3]">
            <svg viewBox="0 0 10 10" className="size-2.5" stroke="currentColor" strokeWidth="2"><path d="M2 2l6 6M8 2l-6 6" /></svg>
          </button>
        </div>
      </nav>
    </header>
  );
}

function LeftEdge() {
  return (
    <div className="flex flex-col overflow-hidden border-r-2 border-[#808080] bg-black">
      <div className="h-[960px] bg-[#0a84e0]" />
      <div className="h-[74px] bg-white" />
      <svg viewBox="0 0 10 716" className="h-[716px] w-[10px]">
        <rect width="1" height="716" fill="#ddd" />
        <g fill="#fff" fontSize="17">
          <text x="6" y="22">F</text>
          <text x="1" y="423">1</text>
          <text x="1" y="451">4</text>
          <text x="0" y="479">4</text>
        </g>
        <path d="M1 482H10M1 612H10" stroke="#ff00ff" strokeWidth="2" />
        <path d="M4 518H10" stroke="#ff0" strokeWidth="2" />
        <path d="M0 528h8v2h2v8h-10z" fill="#c0c0c0" />
        <path d="M1 590h3v6h1v6h5v14h-9zM1 630h4v8h-4zM1 658h2v20h-2z" fill="#808080" />
      </svg>
      <div className="h-[47px] bg-white" />
      <div className="h-[31px] bg-[#505050]" />
      <div className="h-9 bg-[#003c64]" />
      <div className="flex-1 bg-[#46505a]" />
    </div>
  );
}

function RightEdge() {
  return (
    <div className="flex flex-col bg-black">
      <div className="h-[966px] bg-[#0543b5]" />
      <div className="h-[74px] bg-white" />
      <div className="h-[1004px] border-r border-[#2a4a8a]" />
      <div className="h-7 bg-[#00c000]" />
      <div className="h-7 bg-[#f0f0f0]" />
      <div className="flex-1 bg-[#c6d2e6]" />
    </div>
  );
}

export default function App() {
  return (
    <div
      className="relative grid min-h-screen grid-cols-[12px_minmax(0,1fr)_12px] overflow-hidden bg-[#f0f0f0]"
      style={{ fontFamily: '"Open Sans", "Noto Sans", sans-serif' }}
    >
      <LeftEdge />
      <div className="flex min-w-0 flex-col">
        <TitleBar />

        <div className="flex h-[52px] items-start gap-1 bg-[#f0f0f0] pt-[2px]">
          <div className="flex h-[47px] w-[328px] items-center bg-[#4dff4d] pl-1 text-[11px] whitespace-pre text-black">
            {"DF:4828065  ST:9, 9  BR:118.42M  DL:0"}
          </div>
          {TOOL_GROUPS.map((group, g) => (
            <div key={g} className="flex border-t border-white">
              {group.map((tool, k) => (
                <ToolButton key={k} {...tool} />
              ))}
            </div>
          ))}
        </div>

        <div className="h-[25px] border-b-2 border-[#7a7a7a] bg-[#f0f0f0]">
          <button type="button" className="block h-[21px] w-[168px] bg-[#0078d7] pl-1 text-left text-[11px] whitespace-nowrap text-white">
            10.6.4.20ESnew (1).backup2092
          </button>
        </div>

        <main className="relative">
          <Chart />
          <div className="absolute top-0 left-1 text-[19px] leading-[30px]">
            <div className="flex">
              {HEADER.map(([text, style]) => (
                <span key={text} className={clsx("h-7 shrink-0 whitespace-pre", style)}>{text}</span>
              ))}
            </div>
            <div className="h-7 w-[94px] bg-[#0080c0] whitespace-nowrap text-white">DPL: 0.00P</div>
          </div>
        </main>

        <div className="flex h-[27px] items-center justify-between border-b-2 border-[#dcdcdc] bg-[#f0f0f0]">
          <button type="button" aria-label="Scroll left" className="ml-2">
            <svg viewBox="0 0 10 12" className="h-3 w-2.5" fill="none" stroke="#505050" strokeWidth="2"><path d="M8 1l-6 5l6 5" /></svg>
          </button>
          <div className="flex h-full items-center gap-2">
            <div className="h-6 w-[26px] bg-[#cdcdcd]" />
            <button type="button" aria-label="Scroll right" className="mr-2">
              <svg viewBox="0 0 10 12" className="h-3 w-2.5" fill="none" stroke="#505050" strokeWidth="2"><path d="M2 1l6 5l-6 5" /></svg>
            </button>
          </div>
        </div>

        <div className="relative flex h-6 bg-[#f0f0f0] text-[11px]">
          {TABS.map(([label, w], k) => (
            <button
              key={k}
              type="button"
              aria-label={label === "" ? "Chart tab" : undefined}
              className={clsx(
                "h-[22px] shrink-0 border-r border-[#a0a0a0] px-[2px] leading-[24px] whitespace-nowrap",
                label.startsWith("TH") ? "text-right" : "text-left",
                label === "Renko" ? "bg-[#0078d7] text-white" : "text-black",
                w,
              )}
            >
              {label}
            </button>
          ))}
          <div className="absolute inset-x-0 bottom-0 h-2 bg-[#eeeeee]/80" />
        </div>

        <footer className="flex h-[11px] justify-end overflow-hidden bg-[#c9dcea] text-[18px] leading-6 text-black">
          <time className="mr-[86px]">7:51 AM</time>
        </footer>
      </div>
      <RightEdge />
      <div className="absolute bottom-0 left-0 h-7 w-[180px] overflow-hidden bg-black text-[18px] leading-7 whitespace-nowrap text-white">
        www.sierrachart.com
      </div>
    </div>
  );
}
